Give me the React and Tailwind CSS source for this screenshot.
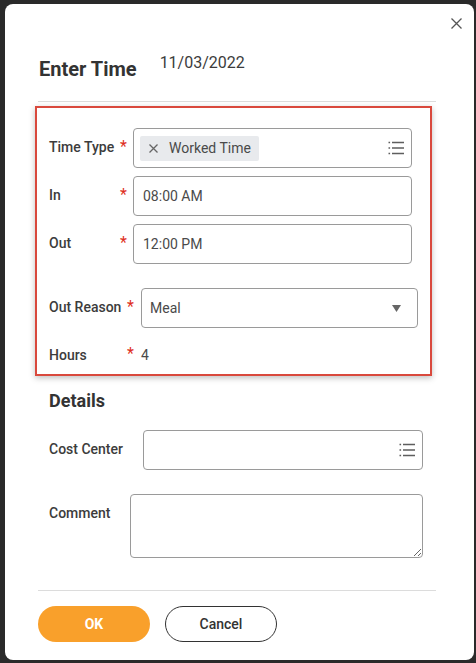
import React from 'react';

function ListIcon() {
  return (
    <svg width="16" height="14" viewBox="0 0 16 14" fill="none" stroke="#5e5e5e" strokeWidth="1.4">
      <path d="M0.5 1.5h1.6M0.5 7h1.6M0.5 12.5h1.6" />
      <path d="M4 1.5h12M4 7h12M4 12.5h12" />
    </svg>
  );
}

function Star({ w }) {
  return <span className={`${w} text-[16px] leading-none text-[#de2e21] -mt-[3px]`}>*</span>;
}

function Field({ children, className }) {
  return (
    <div className={`h-[40px] flex items-center border border-[#9a9a9a] rounded-[4px] bg-white text-[#4a4a4a] ${className}`}>
      {children}
    </div>
  );
}

export default function App() {
  return (
    <div className="w-[476px] h-[663px] bg-[#2a2a2a] pt-[4px] pl-[5px] pr-[2px] pb-[3px] font-['Roboto',sans-serif] text-[#3c3c3c]">
      <div className="h-full bg-white rounded-[8px] flex flex-col">
        <div className="flex justify-end pt-[14px] pr-[12px]">
          <svg width="11" height="11" viewBox="0 0 11 11" stroke="#555" strokeWidth="1.3">
            <path d="M0.5 0.5l10 10M10.5 0.5l-10 10" />
          </svg>
        </div>

        <div className="flex items-start pl-[34px] mt-[26px]">
          <h1 className="text-[20px] leading-[28px] font-bold text-[#333]">Enter Time</h1>
          <span className="ml-[23px] -mt-[4px] text-[16px] leading-[24px] text-[#3c3c3c]">11/03/2022</span>
        </div>

        <div className="ml-[33px] w-[398px] h-px bg-[#dcdcdc] mt-[18px]" />

        <div className="ml-[30px] w-[397px] mt-[4px] border-2 border-[#d9493d] shadow-[0_2px_6px_rgba(0,0,0,0.25)] pt-[20px] pl-[12px] pb-[9px]">
          <div className="flex flex-col gap-[8px]">
            <div className="flex items-center">
              <span className="w-[71px] text-[14px] font-medium -mt-px">Time Type</span>
              <Star w="w-[13px]" />
              <Field className="w-[279px] pl-[6px] pr-[7px] justify-between">
                <span className="h-[25px] flex items-center bg-[#e8eaed] rounded-[2px] pl-[9px] pr-[8px] text-[14px]">
                  <svg width="9" height="9" viewBox="0 0 9 9" stroke="#666" strokeWidth="1.3">
                    <path d="M0.5 0.5l8 8M8.5 0.5l-8 8" />
                  </svg>
                  <span className="ml-[11px]">Worked Time</span>
                </span>
                <ListIcon />
              </Field>
            </div>
            <div className="flex items-center">
              <span className="w-[71px] text-[14px] font-medium -mt-px">In</span>
              <Star w="w-[13px]" />
              <Field className="w-[279px] pl-[9px] text-[14px]">08:00 AM</Field>
            </div>
            <div className="flex items-center">
              <span className="w-[71px] text-[14px] font-medium -mt-px">Out</span>
              <Star w="w-[13px]" />
              <Field className="w-[279px] pl-[9px] text-[14px]">12:00 PM</Field>
            </div>
          </div>

          <div className="flex items-center mt-[24px]">
            <span className="w-[78px] text-[14px] font-medium -mt-px">Out Reason</span>
            <Star w="w-[14px]" />
            <Field className="w-[277px] pl-[8px] pr-[16px] justify-between text-[14px]">
              <span>Meal</span>
              <svg width="9" height="7" viewBox="0 0 9 7">
                <path d="M0 0h9L4.5 7z" fill="#666" />
              </svg>
            </Field>
          </div>

          <div className="flex items-center mt-[17px] h-[20px]">
            <span className="w-[78px] text-[14px] font-medium">Hours</span>
            <Star w="w-[14px]" />
            <span className="text-[14px] text-[#4a4a4a]">4</span>
          </div>
        </div>

        <div className="pl-[44px] mt-[13px]">
          <h2 className="text-[18px] leading-[24px] font-bold text-[#333]">Details</h2>

          <div className="flex items-center mt-[17px]">
            <span className="w-[94px] text-[14px] font-medium -mt-px">Cost Center</span>
            <Field className="w-[280px] pr-[7px] justify-end">
              <ListIcon />
            </Field>
          </div>

          <div className="flex items-start mt-[24px]">
            <span className="w-[81px] pt-[9px] text-[14px] leading-[20px] font-medium">Comment</span>
            <textarea className="block w-[293px] h-[64px] border border-[#9a9a9a] rounded-[4px] outline-none" />
          </div>
        </div>

        <div className="ml-[33px] w-[398px] h-px bg-[#dcdcdc] mt-[32px]" />

        <div className="flex ml-[33px] mt-[15px] gap-[15px]">
          <button className="w-[112px] h-[36px] rounded-full bg-[#f9a02b] text-white text-[14px] font-bold">OK</button>
          <button className="w-[112px] h-[36px] rounded-full border border-[#333] bg-white text-[#333] text-[14px] font-medium">Cancel</button>
        </div>
      </div>
    </div>
  );
}
